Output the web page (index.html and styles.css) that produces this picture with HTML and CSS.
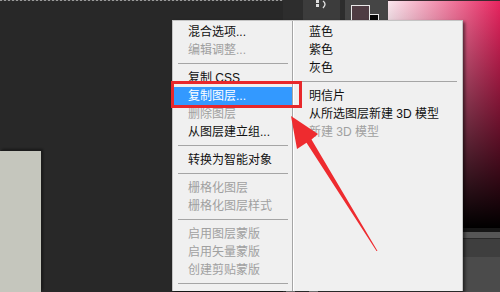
FILE: index.html
```html
<!DOCTYPE html>
<html lang="zh-CN">
<head>
    <meta charset="UTF-8">
    <meta name="viewport" content="width=device-width, initial-scale=1.0">
    <title>图层菜单</title>
    <link rel="stylesheet" href="styles.css">
</head>
<body>
    <div class="app">
        <div class="workspace">
            <div class="ants"></div>
            <div class="doc"></div>
        </div>

        <div class="side">
            <div class="side-top">
                <div class="gap"></div>
                <div class="tools">
                    <svg width="14" height="9" viewBox="0 0 14 9">
                        <rect x="1" y="0" width="3" height="3" fill="#ddd"/>
                        <rect x="1" y="4" width="3" height="3" fill="#ddd"/>
                        <path d="M8 1 Q12 4 8 8" stroke="#ddd" stroke-width="1.4" fill="none"/>
                    </svg>
                </div>
                <div class="gap small"></div>
                <div class="swatches">
                    <div class="bg-swatch"></div>
                    <div class="fg-swatch"></div>
                </div>
                <div class="picker"></div>
            </div>
            <div class="band band-dark"></div>
            <div class="band band-line"></div>
            <div class="band band-mid"></div>
            <div class="band band-low"></div>
            <div class="band band-btns">
                <span class="btn"></span>
                <span class="btn"></span>
            </div>
        </div>
    </div>

    <!-- context menu -->
    <div class="menu">
        <div class="col col-left">
            <div class="item">混合选项...</div>
            <div class="item off">编辑调整...</div>
            <div class="sep"></div>
            <div class="item">复制 CSS</div>
            <div class="item active">复制图层...</div>
            <div class="item off">删除图层</div>
            <div class="item">从图层建立组...</div>
            <div class="sep"></div>
            <div class="item">转换为智能对象</div>
            <div class="sep"></div>
            <div class="item off">栅格化图层</div>
            <div class="item off">栅格化图层样式</div>
            <div class="sep"></div>
            <div class="item off">启用图层蒙版</div>
            <div class="item off">启用矢量蒙版</div>
            <div class="item off">创建剪贴蒙版</div>
            <div class="sep"></div>
            <div class="item off">链接图层</div>
        </div>
        <div class="col col-right">
            <div class="item">蓝色</div>
            <div class="item">紫色</div>
            <div class="item">灰色</div>
            <div class="sep"></div>
            <div class="item">明信片</div>
            <div class="item">从所选图层新建 3D 模型</div>
            <div class="item off">新建 3D 模型</div>
        </div>
    </div>

    <!-- annotation -->
    <div class="mark-box"></div>
    <svg class="mark-arrow" width="500" height="292" viewBox="0 0 500 292">
        <polygon fill="#ee2b2f" points="291,116 318,134 311.5,139.6 377.5,251 376.5,251 306.5,142.8 297,149"/>
    </svg>
</body>
</html>
```

FILE: styles.css
```css
body{
    margin: 0;
    width: 500px;
    height: 292px;
    overflow: hidden;
    background: #282828;
    font-family: "Liberation Sans", "Noto Sans CJK SC", sans-serif;
    font-size: 12px;
}
.app{
    display: flex;
    height: 292px;
}
.workspace{
    width: 283px;
    display: flex;
    flex-direction: column;
    justify-content: space-between;
    background: #282828;
}
.ants{
    height: 1px;
    background: repeating-linear-gradient(to right, #9a9a9a 0 2px, #3a3a3a 2px 4px);
}
.doc{
    width: 41px;
    height: 141px;
    background: #c5c6bd;
    box-shadow: 1px -1px 0 #1c1c1c, 2px -2px 2px rgba(0,0,0,.4);
}
.side{
    flex: 1;
    display: flex;
    flex-direction: column;
}
.side-top{
    display: flex;
    height: 228px;
}
.gap{
    width: 20px;
    background: #2d2d2d;
}
.gap.small{
    width: 5px;
}
.tools{
    width: 37px;
    height: 22px;
    background: #3c3c3c;
    display: flex;
    justify-content: center;
}
.swatches{
    width: 43px;
    height: 22px;
    background: #454545;
    position: relative;
}
.fg-swatch{
    position: absolute;
    left: 6px;
    top: 5px;
    width: 17px;
    height: 17px;
    background: #4f3c43;
    border: 1px solid #e8e8e8;
}
.bg-swatch{
    position: absolute;
    left: 22px;
    top: 14px;
    width: 10px;
    height: 10px;
    background: #050505;
    border: 1px solid #e8e8e8;
}
.picker{
    flex: 1;
    background:
        linear-gradient(to bottom, rgba(0,0,0,0) 0%, #000 100%),
        linear-gradient(to right, #fbe6ee 0%, #e8245f 100%);
    border-top: 1px solid #3a2a30;
}
.band-dark{ height: 4px; background: #161616; }
.band-line{ height: 6px; background: #565656; border-bottom: 1px solid #2a2a2a; }
.band-mid{ height: 18px; background: #3e3e3e; }
.band-low{ height: 28px; background: #4b4b4b; }
.band-btns{
    flex: 1;
    background: #4b4b4b;
    display: flex;
    gap: 14px;
    padding-left: 3px;
}
.btn{
    width: 9px;
    background: #cfcfcf;
}

/* menu */
.menu{
    position: absolute;
    left: 172px;
    top: 20px;
    width: 289px;
    height: 270px;
    overflow: hidden;
    display: flex;
    background: #f0f0f0;
    border: 1px solid #c4c4c4;
    border-bottom: 0;
    box-shadow: 2px 2px 3px rgba(0,0,0,.55);
    color: #111;
}
.col{
    padding-top: 2px;
}
.col-left{
    width: 119px;
    border-right: 1px solid #a5a5a5;
}
.col-right{
    flex: 1;
    box-shadow: inset 1px 0 0 #fff;
}
.item{
    height: 18px;
    line-height: 18px;
    padding-left: 15px;
    white-space: nowrap;
}
.col-right .item{
    padding-left: 16px;
}
.item.off{
    color: #a0a0a0;
}
.item.active{
    background: #3399ff;
    color: #fff;
    margin-left: 1px;
    padding-left: 14px;
}
.sep{
    height: 10px;
    box-sizing: border-box;
    padding-top: 4px;
}
.sep::before{
    content: "";
    display: block;
    height: 1px;
    background: #a5a5a5;
}
.col-left .sep{
    margin: 0 4px 0 5px;
}
.col-right .sep{
    margin-right: 5px;
}

/* annotation */
.mark-box{
    position: absolute;
    left: 171px;
    top: 81px;
    width: 125px;
    height: 21px;
    border: 3px solid #e8282b;
}
.mark-arrow{
    position: absolute;
    left: 0;
    top: 0;
    pointer-events: none;
}
```
